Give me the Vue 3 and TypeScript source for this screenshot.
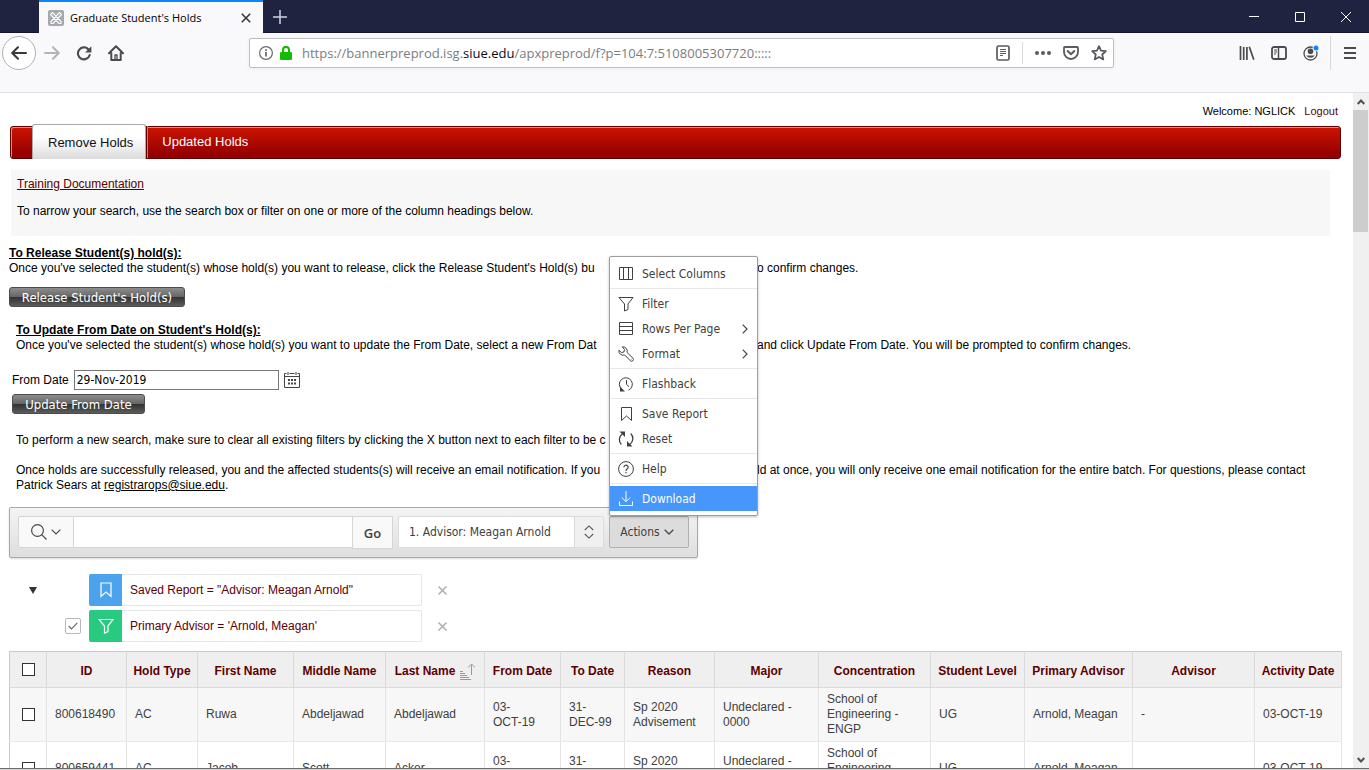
<script setup lang="ts">
import { ref } from 'vue'

interface Column { label: string; width?: number }
interface MenuItem { label: string; icon: string; submenu?: boolean; active?: boolean }

const editingUrl = ref(false)
const url = ref('https://bannerpreprod.isg.siue.edu/apxpreprod/f?p=104:7:5108005307720:::::')
const fromDate = ref('29-Nov-2019')
const search = ref('')
const filterOn = ref(true)

const menuGroups: MenuItem[][] = [
  [{ label: 'Select Columns', icon: 'columns' }],
  [
    { label: 'Filter', icon: 'filter' },
    { label: 'Rows Per Page', icon: 'rows', submenu: true },
    { label: 'Format', icon: 'wrench', submenu: true },
  ],
  [{ label: 'Flashback', icon: 'flashback' }],
  [
    { label: 'Save Report', icon: 'bookmark' },
    { label: 'Reset', icon: 'reset' },
  ],
  [{ label: 'Help', icon: 'help' }],
  [{ label: 'Download', icon: 'download', active: true }],
]

const columns: Column[] = [
  { label: 'ID', width: 80 },
  { label: 'Hold Type', width: 71 },
  { label: 'First Name', width: 96 },
  { label: 'Middle Name', width: 92 },
  { label: 'Last Name', width: 99 },
  { label: 'From Date', width: 76 },
  { label: 'To Date', width: 64 },
  { label: 'Reason', width: 90 },
  { label: 'Major', width: 104 },
  { label: 'Concentration', width: 112 },
  { label: 'Student Level', width: 94 },
  { label: 'Primary Advisor', width: 108 },
  { label: 'Advisor' },
  { label: 'Activity Date', width: 87 },
]

const rows: string[][] = [
  ['800618490', 'AC', 'Ruwa', 'Abdeljawad', 'Abdeljawad', '03-\nOCT-19', '31-\nDEC-99', 'Sp 2020\nAdvisement', 'Undeclared -\n0000', 'School of\nEngineering -\nENGP', 'UG', 'Arnold, Meagan', '-', '03-OCT-19'],
  ['800659441', 'AC', 'Jacob', 'Scott', 'Acker', '03-\nOCT-19', '31-\nDEC-99', 'Sp 2020\nAdvisement', 'Undeclared -\n0000', 'School of\nEngineering -\nENGP', 'UG', 'Arnold, Meagan', '', '03-OCT-19'],
]
</script>

<template>
  <div class="window">
    <header class="titlebar">
      <div class="tab">
        <svg class="favicon" width="16" height="16" viewBox="0 0 16 16">
          <rect width="16" height="16" rx="2" fill="#a5a9ac" />
          <path d="M2.500 4.500L4.500 2.500L13 11.500V13.500H11zM13.500 4.500L11.500 2.500L3 11.500V13.500H5z" fill="none" stroke="#fff" stroke-width="1.100" stroke-linejoin="round" />
        </svg>
        <span class="tab-title">Graduate Student's Holds</span>
        <button class="plain" aria-label="Close tab">
          <svg width="10" height="10" viewBox="0 0 10 10"><path d="M.8.8l8.400 8.400M9.200.8L.8 9.200" stroke="#38383d" stroke-width="1.600" /></svg>
        </button>
      </div>
      <button class="plain new-tab" aria-label="New tab">
        <svg width="14" height="14" viewBox="0 0 14 14"><path d="M7 0v14M0 7h14" stroke="#d2d3de" stroke-width="1.500" /></svg>
      </button>
      <div class="controls">
        <button class="plain" aria-label="Minimize"><svg width="10" height="10"><path d="M0 4.500h10" stroke="#fff" /></svg></button>
        <button class="plain" aria-label="Maximize"><svg width="10" height="10"><path d="M.5.5h9v9h-9z" fill="none" stroke="#fff" /></svg></button>
        <button class="plain" aria-label="Close window"><svg width="10" height="10"><path d="M0 0l10 10M10 0L0 10" stroke="#fff" /></svg></button>
      </div>
    </header>

    <div class="toolbar">
      <div class="nav-buttons">
        <button class="plain back" aria-label="Back">
          <svg width="16" height="14" viewBox="0 0 16 14" fill="none" stroke="#38383d" stroke-width="2" stroke-linecap="round" stroke-linejoin="round"><path d="M15 7H1.500M7 1.200L1.200 7L7 12.800" /></svg>
        </button>
        <button class="plain" aria-label="Forward">
          <svg width="16" height="14" viewBox="0 0 16 14" fill="none" stroke="#b4b4b7" stroke-width="2" stroke-linecap="round" stroke-linejoin="round"><path d="M1 7h13.500M9 1.200L14.800 7L9 12.800" /></svg>
        </button>
        <button class="plain" aria-label="Reload">
          <svg width="16" height="16" viewBox="0 0 16 16"><path d="M12.300 4.200A6 6 0 1 0 13.700 10" fill="none" stroke="#4a4a4f" stroke-width="2.100" stroke-linecap="round" /><path d="M15.400 1.200v6.300H9.100z" fill="#4a4a4f" /></svg>
        </button>
        <button class="plain" aria-label="Home">
          <svg width="16" height="16" viewBox="0 0 16 16" fill="none" stroke="#4a4a4f" stroke-width="2" stroke-linejoin="round" stroke-linecap="round"><path d="M1 8.300L8 1.300l7 7M3.300 8v7h9.400V8" /><path d="M7 14.500V10h2v4.500" stroke-width="1.300" /></svg>
        </button>
      </div>
      <div class="address">
        <svg width="14" height="14" viewBox="0 0 14 14"><circle cx="7" cy="7" r="6.400" fill="none" stroke="#6a6a6e" stroke-width="1.200" /><path d="M7 6v4.600M7 3.200v1.700" stroke="#5a5a5e" stroke-width="1.600" /></svg>
        <svg class="lock" width="12" height="14" viewBox="0 0 12 14"><path d="M3 7V3.900a3 3 0 0 1 6 0V7" fill="none" stroke="#12bc00" stroke-width="2" /><rect y="6" width="12" height="8" rx="1.200" fill="#12bc00" /></svg>
        <div class="url">
          <span v-if="!editingUrl" class="url-text">https://bannerpreprod.isg.<b>siue.edu</b>/apxpreprod/f?p=104:7:5108005307720:::::</span>
          <input type="text" aria-label="Address" :value="editingUrl ? url : ''" @focus="editingUrl = true" @blur="editingUrl = false" />
        </div>
        <button class="plain" aria-label="Reader view">
          <svg width="14" height="16" viewBox="0 0 14 16" fill="none" stroke="#5b5b60"><rect x="1" y="1" width="12" height="14" rx="1.500" stroke-width="1.700" /><path d="M4 4.500h6M4 6.500h6M4 8.500h6M4 10.500h3" /></svg>
        </button>
        <i class="address-rule"></i>
        <button class="plain" aria-label="Page actions">
          <svg width="16" height="4" viewBox="0 0 16 4" fill="#5b5b60"><circle cx="2" cy="2" r="2" /><circle cx="8" cy="2" r="2" /><circle cx="14" cy="2" r="2" /></svg>
        </button>
        <button class="plain" aria-label="Save to Pocket">
          <svg width="16" height="14" viewBox="0 0 16 14" fill="none" stroke="#5b5b60" stroke-width="1.800" stroke-linecap="round" stroke-linejoin="round"><path d="M1.800 1h12.400a.8.8 0 0 1 .8.8V6a7 7 0 0 1-14 0V1.800A.8.8 0 0 1 1.800 1z" /><path d="M4.700 5L8 8.200L11.300 5" stroke-width="2" /></svg>
        </button>
        <button class="plain" aria-label="Bookmark this page">
          <svg width="16" height="16" viewBox="0 0 16 16"><path d="M8 1.200l2 4.500 4.900.5-3.700 3.300 1.100 4.900L8 11.900l-4.300 2.500 1.100-4.900L1.100 6.200 6 5.700z" fill="none" stroke="#55555a" stroke-width="1.700" stroke-linejoin="round" /></svg>
        </button>
      </div>
      <div class="tools">
        <button class="plain" aria-label="Library">
          <svg width="16" height="14" viewBox="0 0 16 14" stroke="#4a4a4f" stroke-width="1.700"><path d="M1.500 0v14M4.700 1v13M7.900 1v13M10.300.7l4.500 13" /></svg>
        </button>
        <button class="plain" aria-label="Sidebars">
          <svg width="16" height="14" viewBox="0 0 16 14" fill="none" stroke="#4a4a4f"><rect x="1" y="1" width="14" height="12" rx="2" stroke-width="1.800" /><path d="M7.500 1v12" stroke-width="1.500" /><path d="M3 4h3M3 6h3M3 8h2" /></svg>
        </button>
        <button class="plain" aria-label="Account">
          <svg width="16" height="16" viewBox="0 0 16 16"><circle cx="7.500" cy="8.500" r="6.500" fill="none" stroke="#4a4a4f" stroke-width="1.300" /><circle cx="7.500" cy="6.300" r="2.800" fill="#4a4a4f" /><path d="M3.200 10.500h8.600a5.200 5.200 0 0 1-8.600 0z" fill="#4a4a4f" /><circle cx="13" cy="3" r="3.400" fill="#f9f9fa" /><circle cx="13" cy="3" r="2.500" fill="#0a84ff" /></svg>
        </button>
        <i class="tool-rule"></i>
        <button class="plain" aria-label="Menu">
          <svg width="12" height="12" viewBox="0 0 12 12"><path d="M0 1h12M0 6h12M0 11h12" stroke="#4a4a4f" stroke-width="2" /></svg>
        </button>
      </div>
    </div>

    <div class="viewport">
      <main class="page">
        <div class="welcome"><span>Welcome: NGLICK</span><a href="#logout">Logout</a></div>

        <nav class="tabs">
          <a href="#remove" class="current">Remove Holds</a>
          <a href="#updated">Updated Holds</a>
        </nav>

        <section class="intro">
          <a href="#training">Training Documentation</a>
          <p>To narrow your search, use the search box or filter on one or more of the column headings below.</p>
        </section>

        <section class="release">
          <h2>To Release Student(s) hold(s):</h2>
          <p class="split">
            <span>Once you've selected the student(s) whose hold(s) you want to release, click the Release Student's Hold(s) bu</span>
            <span>o confirm changes.</span>
          </p>
          <button class="dark release-button">Release Student's Hold(s)</button>
        </section>

        <section class="update indented">
          <h2>To Update From Date on Student's Hold(s):</h2>
          <p class="split">
            <span>Once you've selected the student(s) whose hold(s) you want to update the From Date, select a new From Dat</span>
            <span>and click Update From Date. You will be prompted to confirm changes.</span>
          </p>
        </section>

        <form class="date-form" @submit.prevent>
          <div class="date-row">
            <label for="from-date">From Date</label>
            <input id="from-date" v-model="fromDate" type="text" />
            <button type="button" class="plain" aria-label="Pick a date">
              <svg width="16" height="16" viewBox="0 0 16 16"><path d="M2.500 1.500H.5v14h15v-14h-2M5.500 1.500h5M.5 4.500h15M4 0v3M12 0v3" fill="none" stroke="#454545" /><path d="M4 7h2v2H4zM7 7h2v2H7zM10 7h2v2h-2zM4 10.500h2v2H4zM7 10.500h2v2H7zM10 10.500h2v2h-2z" fill="#454545" /></svg>
            </button>
          </div>
          <button class="dark update-button">Update From Date</button>
        </form>

        <section class="notes indented">
          <p>To perform a new search, make sure to clear all existing filters by clicking the X button next to each filter to be c</p>
          <p class="split">
            <span>Once holds are successfully released, you and the affected students(s) will receive an email notification. If you</span>
            <span>ld at once, you will only receive one email notification for the entire batch. For questions, please contact</span>
          </p>
          <p>Patrick Sears at <a href="mailto:registrarops@siue.edu">registrarops@siue.edu</a>.</p>
        </section>

        <div class="searchbar">
          <button class="search-button" aria-label="Select columns to search">
            <svg width="16" height="16" viewBox="0 0 16 16" fill="none" stroke="#4a4a4a" stroke-width="1.200"><circle cx="6.500" cy="6.500" r="5.900" /><path d="M10.700 10.700l4.800 4.800" /></svg>
            <svg width="10" height="6" viewBox="0 0 10 6"><path d="M.7.7L5 5L9.300.7" fill="none" stroke="#4a4a4a" stroke-width="1.200" /></svg>
          </button>
          <input v-model="search" class="search-input" type="text" aria-label="Search report" />
          <button class="go">Go</button>
          <div class="report-select">
            <select aria-label="Saved reports"><option>1. Advisor: Meagan Arnold</option></select>
            <svg width="10" height="14" viewBox="0 0 10 14"><path d="M.8 5L5 .9L9.200 5M.8 9L5 13.100L9.200 9" fill="none" stroke="#555" stroke-width="1.100" /></svg>
          </div>
          <div class="actions">
            <button class="actions-button" aria-haspopup="menu" aria-expanded="true">Actions
              <svg width="10" height="6" viewBox="0 0 10 6"><path d="M.7.7L5 5L9.300.7" fill="none" stroke="#4a4a4a" stroke-width="1.300" /></svg>
            </button>
            <div class="menu" role="menu">
              <div v-for="(group, g) in menuGroups" :key="g" class="menu-group">
                <button v-for="item in group" :key="item.label" role="menuitem" :class="{ active: item.active }">
                  <svg class="menu-icon" width="16" height="16" viewBox="0 0 16 16" fill="none" stroke="currentColor">
                    <path v-if="item.icon === 'columns'" d="M1.500 1.500h13v12h-13zM5.500 1.500v12M10.500 1.500v12" />
                    <path v-else-if="item.icon === 'filter'" d="M1 1.500h14L10 8v5.500L6.500 15V8z" />
                    <path v-else-if="item.icon === 'rows'" d="M1.500 1.500h13v12h-13zM1.500 5.500h13M1.500 9.500h13" />
                    <path v-else-if="item.icon === 'wrench'" d="M4.300.9A4.200 4.200 0 0 1 9 6.400l5.900 5.700a1.800 1.800 0 0 1-2.600 2.600L6.600 8.900A4.200 4.200 0 0 1 .9 4.300L3.500 6.600l2.400-.6.600-2.500zM12.800 13.200h.6" />
                    <g v-else-if="item.icon === 'flashback'"><path d="M4 13.500A6.500 6.500 0 1 1 10.500 14.200M8.500 4v4.500l2.500 2.200" /><path d="M2 10.500v5h5z" fill="currentColor" stroke="none" /></g>
                    <path v-else-if="item.icon === 'bookmark'" d="M3.500 1.500h10v13l-5-4.500-5 4.500z" />
                    <g v-else-if="item.icon === 'reset'"><path d="M3.300 13.500A7 7 0 0 1 4.300 3M12.700 2.500A7 7 0 0 1 12 13.200" stroke-width="1.300" /><path d="M1.500.5h5.500v5.500zM14.500 15.500H9V10z" fill="currentColor" stroke="none" /></g>
                    <g v-else-if="item.icon === 'help'"><circle cx="8" cy="8" r="7.400" /><path d="M5.900 6.200a2.100 2.100 0 1 1 3.200 1.800C8.300 8.500 8 8.900 8 9.900M8 11v1.300" stroke-width="1.200" /></g>
                    <path v-else d="M8 0v10.500M3.800 6.500L8 10.700l4.200-4.200M1.500 10.500v4h13v-4" />
                  </svg>
                  <span>{{ item.label }}</span>
                  <svg v-if="item.submenu" class="chevron" width="6" height="10" viewBox="0 0 6 10"><path d="M.7.7L5 5L.7 9.300" fill="none" stroke="#444" stroke-width="1.200" /></svg>
                </button>
              </div>
            </div>
          </div>
        </div>

        <div class="filters">
          <button class="plain toggle" aria-label="Collapse filters"><svg width="8" height="7"><path d="M0 0h8L4 7z" fill="#333" /></svg></button>
          <div class="filter-list">
            <div class="filter-row">
              <span class="check-slot"></span>
              <div class="filter-box">
                <span class="filter-icon blue"><svg width="12" height="16" viewBox="0 0 12 16"><path d="M1 1h10v13.500l-5-4.500-5 4.500z" fill="none" stroke="#fff" stroke-width="1.200" /></svg></span>
                <a href="#saved">Saved Report = "Advisor: Meagan Arnold"</a>
              </div>
              <button class="plain" aria-label="Remove saved report"><svg width="9" height="9"><path d="M.5.5l8 8M8.500.5l-8 8" stroke="#aaa" stroke-width="1.400" /></svg></button>
            </div>
            <div class="filter-row">
              <span class="check-slot"><input v-model="filterOn" type="checkbox" aria-label="Enable Primary Advisor filter" /><svg width="10" height="8" viewBox="0 0 10 8"><path d="M.7 4l2.800 3L9.300.8" fill="none" stroke="#666" stroke-width="1.100" /></svg></span>
              <div class="filter-box">
                <span class="filter-icon green"><svg width="16" height="16" viewBox="0 0 16 16"><path d="M1 1.500h14L10 8v5.500L6.500 15V8z" fill="none" stroke="#fff" stroke-width="1.200" /></svg></span>
                <a href="#primary">Primary Advisor = 'Arnold, Meagan'</a>
              </div>
              <button class="plain" aria-label="Remove Primary Advisor filter"><svg width="9" height="9"><path d="M.5.5l8 8M8.500.5l-8 8" stroke="#aaa" stroke-width="1.400" /></svg></button>
            </div>
          </div>
        </div>

        <table>
          <colgroup>
            <col class="check-col" />
            <col v-for="c in columns" :key="c.label" :style="{ width: c.width ? c.width + 'px' : 'auto' }" />
          </colgroup>
          <thead>
            <tr>
              <th><input type="checkbox" aria-label="Select all rows" /></th>
              <th v-for="c in columns" :key="c.label">
                <a :href="'#' + c.label.toLowerCase().replace(' ', '-')">{{ c.label }}<svg v-if="c.label === 'Last Name'" class="sort" width="15" height="17" viewBox="0 0 15 17" fill="none" stroke="#999"><path d="M0 8.500h3M0 10.500h5M0 12.500h7M0 14.500h9M0 16.500h11M11.500 12V2M8 4.500L11.500 1L15 4.500" /></svg></a>
              </th>
            </tr>
          </thead>
          <tbody>
            <tr v-for="row in rows" :key="row[0]">
              <td><input type="checkbox" :aria-label="'Select ' + row[0]" /></td>
              <td v-for="(cell, i) in row" :key="i">{{ cell }}</td>
            </tr>
          </tbody>
        </table>
      </main>

      <div class="scrollbar" aria-hidden="true">
        <svg width="8" height="6" viewBox="0 0 8 6"><path d="M.7 5L4 1.500L7.300 5" fill="none" stroke="#505050" stroke-width="2" /></svg>
        <div class="track"><div class="thumb"></div></div>
        <svg width="8" height="6" viewBox="0 0 8 6"><path d="M.7 1L4 4.500L7.300 1" fill="none" stroke="#505050" stroke-width="2" /></svg>
      </div>
    </div>
  </div>
</template>

<style>
html, body { overflow: hidden; background: #fff; }
</style>

<style scoped>
* { box-sizing: border-box; }
.window { height: 100vh; display: flex; flex-direction: column; font: 12px/15px "Liberation Sans", Arial, sans-serif; color: #000; border-bottom: 1px solid #d8d8d8; }
svg { display: block; flex: none; }
button, input, select { font: inherit; margin: 0; color: inherit; }
h2, p { margin: 0; font-size: 12px; }
.plain { border: 0; background: none; padding: 0; display: flex; align-items: center; justify-content: center; }

.titlebar { height: 33px; flex: none; display: flex; align-items: center; background: #20233f; padding-left: 39px; box-shadow: inset 0 -1px #13152a; }
.tab { width: 224px; height: 33px; background: #f9f9fb; border-top: 2px solid #0a84ff; display: flex; align-items: center; padding: 0 12px 0 9px; }
.tab-title { flex: 1; margin-left: 6px; font: 11px/16px "Open Sans", "Noto Sans", sans-serif; white-space: nowrap; }
.new-tab { margin-left: 10px; }
.controls { margin-left: auto; display: flex; }
.controls button { width: 46px; height: 32px; }

.toolbar { height: 60px; flex: none; display: flex; justify-content: space-between; background: #f9f9fb; border-bottom: 1px solid #e0e0e1; padding: 3px 13px 0 2px; }
.nav-buttons { display: flex; align-items: center; height: 34px; }
.nav-buttons button { width: 32px; height: 34px; }
.nav-buttons .back { width: 34px; border: 1px solid #b1b1b3; border-radius: 50%; background: #fff; }
.address { height: 30px; margin: 2px 0 0 117px; flex: 0 1 865px; background: #fff; border: 1px solid #bebec0; border-radius: 2px; box-shadow: 0 1px 4px #0000000d; display: flex; align-items: center; padding: 0 6px 0 9px; gap: 12px; }
.address .lock { margin-left: -5px; }
.url { position: relative; flex: 1; height: 28px; margin-left: -2px; font: 13px/28px "Open Sans", "Noto Sans", sans-serif; }
.url input { width: 100%; height: 28px; border: 0; background: none; outline: none; padding: 0; }
.url-text { position: absolute; left: 0; top: 0; pointer-events: none; white-space: nowrap; color: #7c7c7f; }
.url-text b { font-weight: 400; color: #0c0c0d; }
.address-rule { width: 1px; height: 22px; background: #dcdcde; }
.tools { display: flex; align-items: center; gap: 16px; height: 34px; margin-left: auto; }
.tool-rule { width: 1px; height: 34px; background: #d7d7db; margin: 0 -3px 0 -5px; }

.viewport { flex: 1; min-height: 0; display: flex; overflow: hidden; border-bottom: 1px solid #6a6a6a; }
.page { flex: 1; min-width: 0; padding: 0 11px 0 9px; }
.page a { color: #5c0000; }
.welcome { height: 33px; padding: 11px 4px 0 0; display: flex; justify-content: flex-end; gap: 9px; font-size: 11px; }
.welcome a { text-decoration: none; }
.tabs { height: 33px; margin: 0 1px; padding-left: 21px; display: flex; align-items: flex-end; border: 1px solid #5c0000; border-radius: 3px; background: linear-gradient(#cc1400, #980000 85%); box-shadow: inset 1px 1px #ee8580; font-size: 13px; }
.tabs a { height: 32px; padding: 0 14px; line-height: 32px; color: #fff; text-decoration: none; border-left: 1px solid #e07070; }
.tabs a.current { height: 35px; margin-bottom: -1px; line-height: 36px; padding: 0 12px 0 15px; color: #111; border: 1px solid #a9a9a9; border-bottom: 0; border-radius: 3px 3px 0 0; background: linear-gradient(#fff 35%, #dcdcdc); }
.page .tabs a:not(.current) { color: #fff; }
.tabs a.current + a { box-shadow: -1px 0 #5c0000; margin-left: 1px; }
.intro { margin: 11px 12px 0 2px; padding: 7px 6px 17px; background: #f7f7f7; }
.intro a { display: block; width: fit-content; }
.intro p { margin-top: 12px; }
.release { margin-top: 10px; }
.release h2, .update h2 { text-decoration: underline; }
/* The open Actions menu lies over the middle of these lines. */
.split { display: flex; white-space: nowrap; }
.split span:first-child { width: 748px; flex: none; }
.indented .split span:first-child { width: 741px; }
.dark { display: block; height: 20px; border: 1px solid #4c4c4c; border-radius: 3px; padding: 0; background: linear-gradient(#8d8d8d, #666 48%, #333 52%, #5c5c5c); color: #fff; font: 13px/17px "DejaVu Sans Condensed", "Noto Sans", sans-serif; }
.release-button { margin-top: 11px; width: 176px; }
.update { margin: 16px 0 0 7px; }
.date-form { margin: 17px 0 0 3px; }
.date-row { display: flex; align-items: center; gap: 5px; }
.date-row input { width: 205px; height: 20px; border: 1px solid #767676; padding: 0 2px; font: 12px/18px "DejaVu Sans Condensed", "Noto Sans", sans-serif; }
.update-button { margin-top: 4px; width: 133px; }
.notes { margin: 19px 0 0 7px; }
.notes p { white-space: nowrap; }
.notes .split { margin-top: 15px; }
.notes a { color: #000; }

.searchbar { width: fit-content; height: 51px; margin-top: 14px; padding: 8px; display: flex; align-items: flex-start; border: 1px solid #a8a8a8; border-radius: 2px; background: linear-gradient(#f4f4f4, #dedede); box-shadow: 0 1px 2px #00000026; color: #404040; font: 12px/16px "DejaVu Sans Condensed", "Noto Sans", sans-serif; }
.search-button { width: 56px; height: 32px; padding: 0; display: flex; align-items: center; justify-content: center; gap: 4px; border: 1px solid #d5d5d5; border-radius: 2px 0 0 2px; background: #f9f9f9; }
.search-input { width: 278px; height: 32px; border: 1px solid #d5d5d5; border-width: 1px 0; background: #fff; padding: 0 8px; }
.go { width: 41px; height: 33px; padding: 0; border: 1px solid #d5d5d5; background: #f9f9f9; font: 600 13px/16px "Open Sans", "Noto Sans", sans-serif; }
.report-select { position: relative; width: 206px; margin: 0 5px; }
.report-select select { width: 100%; height: 32px; appearance: none; border: 1px solid #dcdcdc; border-radius: 2px; padding: 0 34px 0 10px; background: linear-gradient(to right, #fff 175px, #d8d8d8 175px 176px, #f0f0f0 176px); }
.report-select svg { position: absolute; right: 10px; top: 9px; pointer-events: none; }
.actions { position: relative; }
.actions-button { width: 80px; height: 32px; padding: 0 4px 0 0; display: flex; align-items: center; justify-content: center; gap: 4px; border: 1px solid #b0b0b0; border-radius: 2px; background: #dcdcdc; }
.menu { position: absolute; left: 0; bottom: 100%; width: 149px; padding: 4px 0; border: 1px solid #9d9d9d; border-radius: 2px; background: #fff; box-shadow: 0 1px 3px #00000040; color: #404040; }
.menu-group + .menu-group { border-top: 1px solid #e8e8e8; margin-top: 2px; padding-top: 2px; }
.menu button { width: 100%; height: 25px; display: flex; align-items: center; gap: 8px; padding: 0 9px 0 8px; border: 0; background: none; white-space: nowrap; }
.menu button.active { background: #4696fc; color: #fff; }
.chevron { margin-left: auto; }

.filters { margin-top: 16px; display: flex; align-items: flex-start; }
.toggle { width: 48px; height: 32px; }
.filter-list { display: grid; gap: 4px; }
.filter-row { display: flex; align-items: center; height: 32px; }
.check-slot { position: relative; width: 32px; height: 16px; padding-left: 8px; }
.check-slot input { display: block; appearance: none; width: 16px; height: 16px; border: 1px solid #b8b8b8; border-radius: 2px; background: #fff; }
.check-slot svg { position: absolute; left: 11px; top: 4px; pointer-events: none; }
.filter-box { width: 333px; height: 32px; margin-right: 16px; display: flex; align-items: center; border: 1px solid #e6e6e6; border-left: 0; border-radius: 2px; }
.filter-box a { margin-left: 8px; text-decoration: none; }
.filter-icon { width: 33px; height: 32px; margin: -1px 0; display: flex; align-items: center; justify-content: center; border-radius: 2px 0 0 2px; }
.blue { background: #4aa3ec; }
.green { background: #27ca7e; }

table { width: 100%; margin-top: 9px; table-layout: fixed; border-collapse: collapse; border: 1px solid #c9c9c9; color: #404040; }
.check-col { width: 37px; }
th, td { padding: 4px 8px; border-right: 1px solid #e3e3e3; border-bottom: 1px solid #e9e9e9; text-align: left; white-space: pre-line; }
th { height: 36px; padding: 4px 0 0; background: #efefef; border-color: #dadada; text-align: center; white-space: nowrap; }
th a { display: flex; align-items: center; justify-content: center; text-decoration: none; }
.sort { margin-left: 5px; }
td { height: 54px; }
tbody tr:first-child td { background: #f7f7f7; }
th:first-child, td:first-child { padding: 0; }
th input, td input { display: block; appearance: none; width: 13px; height: 13px; margin: 0 auto; border: 1px solid #333; background: #fff; }

.scrollbar { width: 16px; flex: none; display: flex; flex-direction: column; align-items: center; background: #f0f0f0; padding: 6px 0 5px; }
.track { flex: 1; width: 16px; margin: 5px 0; }
.thumb { width: 15px; height: 19%; background: #cdcdcd; }
</style>
